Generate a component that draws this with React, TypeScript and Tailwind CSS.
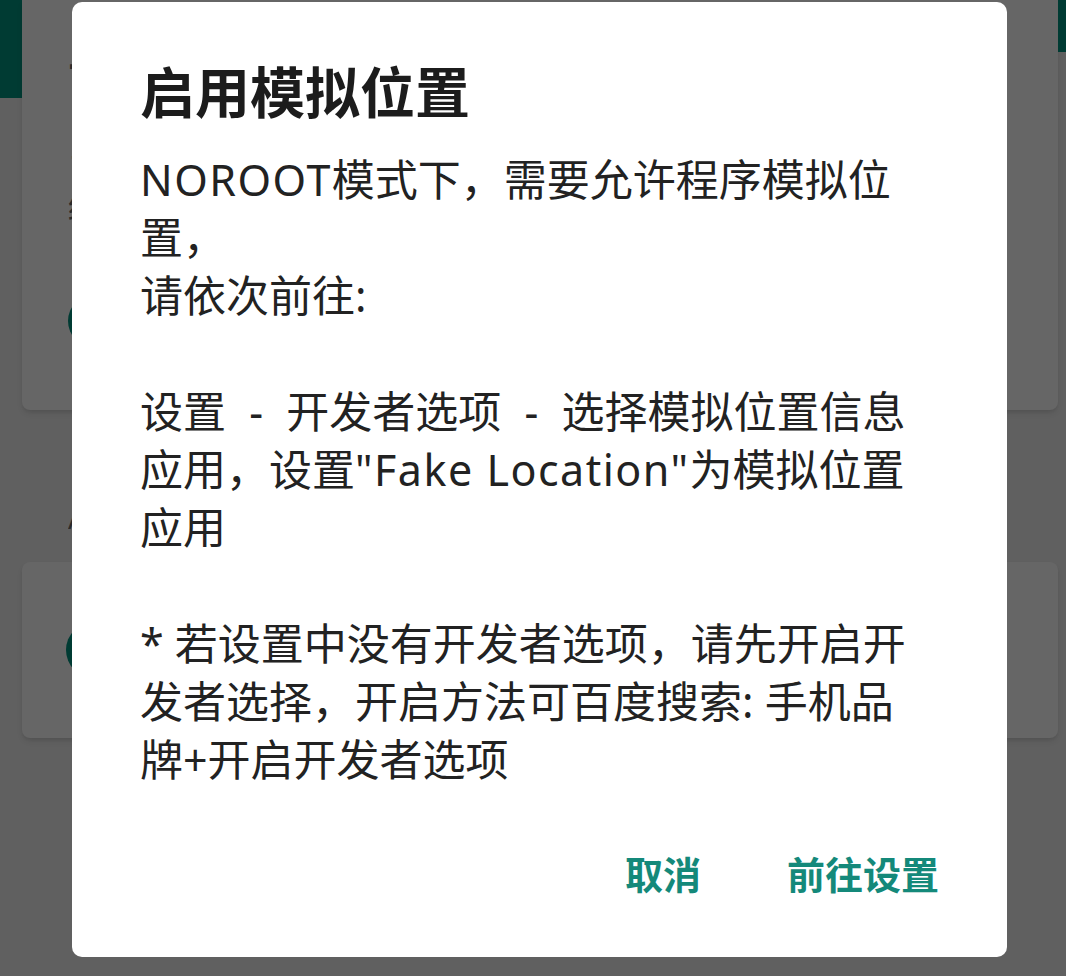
import React from "react";

const Dash = () => <span className="mx-[12px]">-</span>;

const Latin = ({ children }: { children: React.ReactNode }) => (
    <span className="tracking-[1.5px]">{children}</span>
);

const Line = ({ children }: { children?: React.ReactNode }) => (
    <div className="h-[58px] leading-[58px] whitespace-nowrap">{children}</div>
);

// page text mostly hidden by the dialog, only a sliver shows
const Peek = ({ className, children }: { className: string; children: React.ReactNode }) => (
    <div className={"w-[30px] overflow-hidden whitespace-nowrap " + className}>{children}</div>
);

const App = () => {
    return (
        <div className="relative w-[1066px] h-[976px] overflow-hidden bg-[#606060] font-['Noto_Sans','Noto_Sans_CJK_SC',sans-serif]">
            {/* page behind the dialog */}
            <div className="flex items-start">
                <div className="w-[22px] h-[98px] bg-[#003b33]"/>
                <div className="flex-1 flex flex-col">
                    <div className="h-[410px] rounded-b-lg bg-[#666666] shadow-md pl-[46px] pt-[56px] text-[#2a2a2a]">
                        <Peek className="text-[42px] leading-[46px] font-bold">首页</Peek>
                        <Peek className="mt-[22px] text-[36px] leading-[40px]">当前</Peek>
                        <Peek className="mt-[26px] text-[30px] leading-[34px]">结果</Peek>
                        <div className="mt-[70px] w-[54px] h-[54px] rounded-full bg-[#003b33]"/>
                    </div>
                    <div className="h-[152px] pl-[46px] pt-[92px] text-[#2a2a2a]">
                        <Peek className="text-[28px] leading-[32px]">A</Peek>
                    </div>
                    <div className="h-[176px] rounded-lg bg-[#666666] shadow-md pl-[44px] pt-[60px]">
                        <div className="w-[56px] h-[56px] rounded-full bg-[#003b33]"/>
                    </div>
                </div>
                <div className="w-[8px] h-[52px] bg-[#003b33]"/>
            </div>

            {/* dialog */}
            <div className="absolute left-[72px] top-[2px] w-[935px] h-[955px] rounded-[10px] bg-white px-[68px] pt-[58px] flex flex-col">
                <div className="text-[55px] leading-[64px] font-bold text-[#1c1c1c]">启用模拟位置</div>
                <div className="mt-[27px] text-[43px] text-[#222222]">
                    <Line><Latin>NOROOT</Latin>模式下，需要允许程序模拟位</Line>
                    <Line>置，</Line>
                    <Line>请依次前往:</Line>
                    <Line/>
                    <Line>设置 <Dash/> 开发者选项 <Dash/> 选择模拟位置信息</Line>
                    <Line>应用，设置<Latin>"Fake Location"</Latin>为模拟位置</Line>
                    <Line>应用</Line>
                    <Line/>
                    <Line>* 若设置中没有开发者选项，请先开启开</Line>
                    <Line>发者选择，开启方法可百度搜索: 手机品</Line>
                    <Line>牌+开启开发者选项</Line>
                </div>
                <div className="mt-[61px] flex justify-end gap-[86px] text-[38px] leading-[48px] font-bold text-[#14897a]">
                    <button>取消</button>
                    <button>前往设置</button>
                </div>
            </div>
        </div>
    );
};

export default App;
